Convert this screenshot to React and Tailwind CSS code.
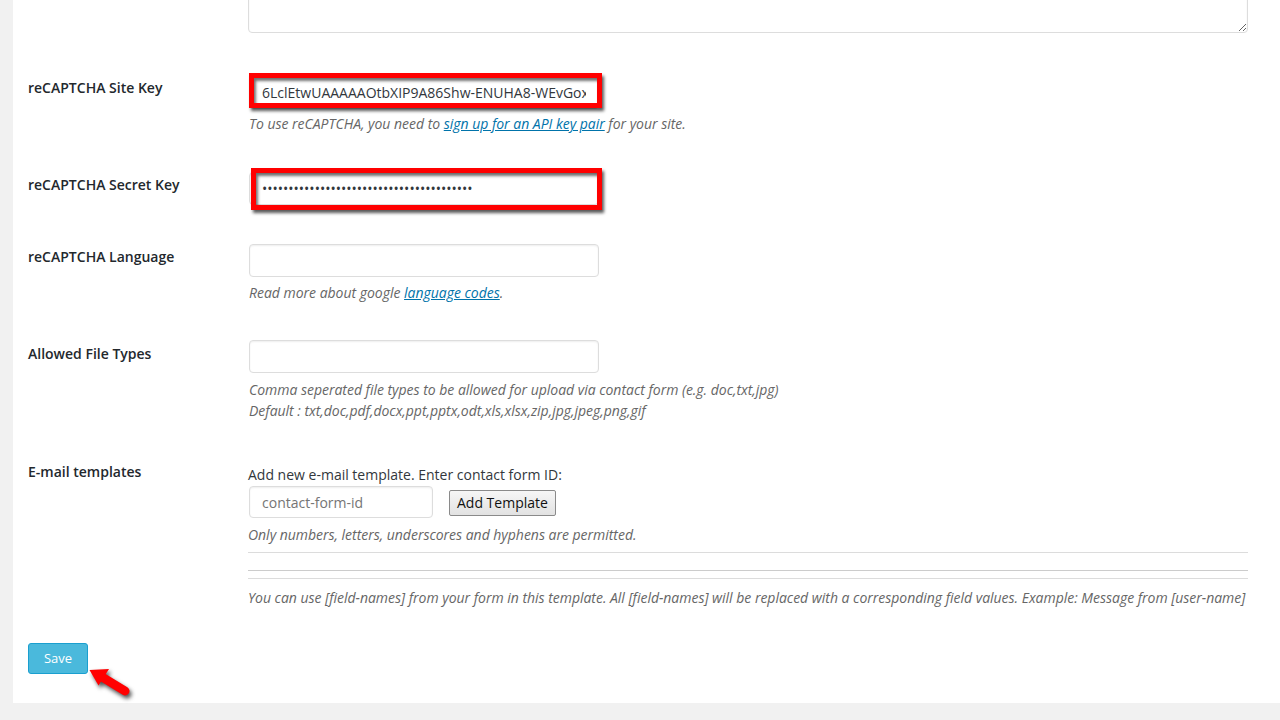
import React from "react";

const font = { fontFamily: '"Open Sans", "Noto Sans", sans-serif' };

function Label({ children, pt = "pt-[2px]" }) {
  return (
    <div className={`w-[220px] shrink-0 text-[14px] leading-[20px] font-semibold text-[#23282d] ${pt}`}>
      {children}
    </div>
  );
}

function Help({ children, className = "" }) {
  return (
    <p className={`text-[14px] leading-[21px] italic tracking-[-0.02px] text-[#666] ${className}`}>{children}</p>
  );
}

function Marker({ className }) {
  return (
    <div
      className={`pointer-events-none absolute border-[5px] border-[#ff0000] shadow-[2px_3px_3px_rgba(0,0,0,0.65),inset_2px_3px_3px_rgba(0,0,0,0.55)] ${className}`}
    />
  );
}

const inputCls =
  "block w-[350px] h-[33px] rounded-[4px] border border-[#ddd] bg-white px-[12px] text-[14px] text-[#32373c] shadow-[inset_0_1px_2px_rgba(0,0,0,0.07)] outline-none";

export default function App() {
  return (
    <div style={font} className="min-h-[720px] w-[1280px] bg-[#f1f1f1] pl-[13px]">
      <div className="relative bg-white pl-[15px] pb-[29px]">
        {/* message textarea, only its lower edge is in view */}
        <div className="flex">
          <div className="w-[220px] shrink-0" />
          <div className="h-[33px] w-[1000px] overflow-hidden">
            <textarea
              className="-mt-[67px] block h-[100px] w-[1000px] rounded-[4px] border border-[#ddd] bg-white shadow-[inset_0_1px_2px_rgba(0,0,0,0.07)] outline-none"
              defaultValue=""
            />
          </div>
        </div>

        {/* Site key */}
        <div className="mt-[43px] flex">
          <Label>reCAPTCHA Site Key</Label>
          <div className="pl-[1px]">
            <div className="relative w-[350px]">
              <input
                className={inputCls}
                readOnly
                value="6LclEtwUAAAAAOtbXIP9A86Shw-ENUHA8-WEvGoxq7mSd"
              />
              <Marker className="-left-[0px] -top-[3px] h-[35px] w-[353px]" />
            </div>
            <Help className="mt-[4px]">
              To use reCAPTCHA, you need to{" "}
              <a className="text-[#0073aa] underline" href="#">
                sign up for an API key pair
              </a>{" "}
              for your site.
            </Help>
          </div>
        </div>

        {/* Secret key */}
        <div className="mt-[38px] flex">
          <Label pt="pt-[3px]">reCAPTCHA Secret Key</Label>
          <div className="pl-[1px]">
            <div className="relative w-[350px]">
              <input
                type="password"
                className={inputCls}
                readOnly
                value="xxxxxxxxxxxxxxxxxxxxxxxxxxxxxxxxxxxxxxxx"
              />
              <Marker className="left-[2px] -top-[4px] h-[42px] w-[351px]" />
            </div>
          </div>
        </div>

        {/* Language */}
        <div className="mt-[39px] flex">
          <Label pt="pt-[3px]">reCAPTCHA Language</Label>
          <div className="pl-[1px]">
            <input className={inputCls} readOnly value="" />
            <Help className="mt-[5px]">
              Read more about google{" "}
              <a className="text-[#0073aa] underline" href="#">
                language codes
              </a>
              .
            </Help>
          </div>
        </div>

        {/* File types */}
        <div className="mt-[37px] flex">
          <Label pt="pt-[4px]">Allowed File Types</Label>
          <div className="pl-[1px]">
            <input className={inputCls} readOnly value="" />
            <Help className="mt-[6px]">
              Comma seperated file types to be allowed for upload via contact form (e.g. doc,txt,jpg)
            </Help>
            <Help>Default : txt,doc,pdf,docx,ppt,pptx,odt,xls,xlsx,zip,jpg,jpeg,png,gif</Help>
          </div>
        </div>

        {/* E-mail templates */}
        <div className="mt-[39px] flex">
          <Label pt="pt-[2px]">E-mail templates</Label>
          <div className="w-[1000px] pt-[4px]">
            <p className="text-[14px] leading-[21px] text-[#32373c]">
              Add new e-mail template. Enter contact form ID:
            </p>
            <div className="mt-[1px] flex items-center pl-[1px]">
              <input
                className="block h-[32px] w-[184px] rounded-[4px] border border-[#ddd] bg-white px-[12px] text-[14px] text-[#32373c] placeholder:text-[#757575] shadow-[inset_0_1px_2px_rgba(0,0,0,0.07)] outline-none"
                placeholder="contact-form-id"
              />
              <button className="ml-[16px] mt-[2px] h-[26px] rounded-[2px] border border-[#8a8a8a] bg-gradient-to-b from-[#f6f6f6] to-[#e2e2e2] px-[7px] text-[14px] leading-[20px] text-[#111]">
                Add Template
              </button>
            </div>
            <Help className="mt-[6px]">Only numbers, letters, underscores and hyphens are permitted.</Help>
            <div className="mt-[7px] h-px bg-[#dcdcdc]" />
            <div className="mt-[17px] h-px bg-[#cccccc]" />
            <div className="mt-[7px] h-px bg-[#dcdcdc]" />
            <Help className="mt-[8px] whitespace-nowrap">
              You can use [field-names] from your form in this template. All [field-names] will be replaced with a corresponding field values. Example: Message from [user-name]
            </Help>
          </div>
        </div>

        {/* Save */}
        <div className="relative mt-[35px]">
          <button className="h-[31px] w-[60px] rounded-[3px] border border-[#1a9fcf] bg-[#4ab9dc] text-[13px] text-white">
            Save
          </button>
          <svg
            className="pointer-events-none absolute left-[58px] top-[14px] drop-shadow-[2px_3px_2px_rgba(0,0,0,0.7)]"
            width="50"
            height="42"
            viewBox="0 0 50 42"
          >
            <polygon points="3.5,13 23,12 12.5,28.5" fill="#f00" />
            <line x1="16" y1="20" x2="39" y2="34" stroke="#f00" strokeWidth="9" strokeLinecap="round" />
          </svg>
        </div>
      </div>
    </div>
  );
}
